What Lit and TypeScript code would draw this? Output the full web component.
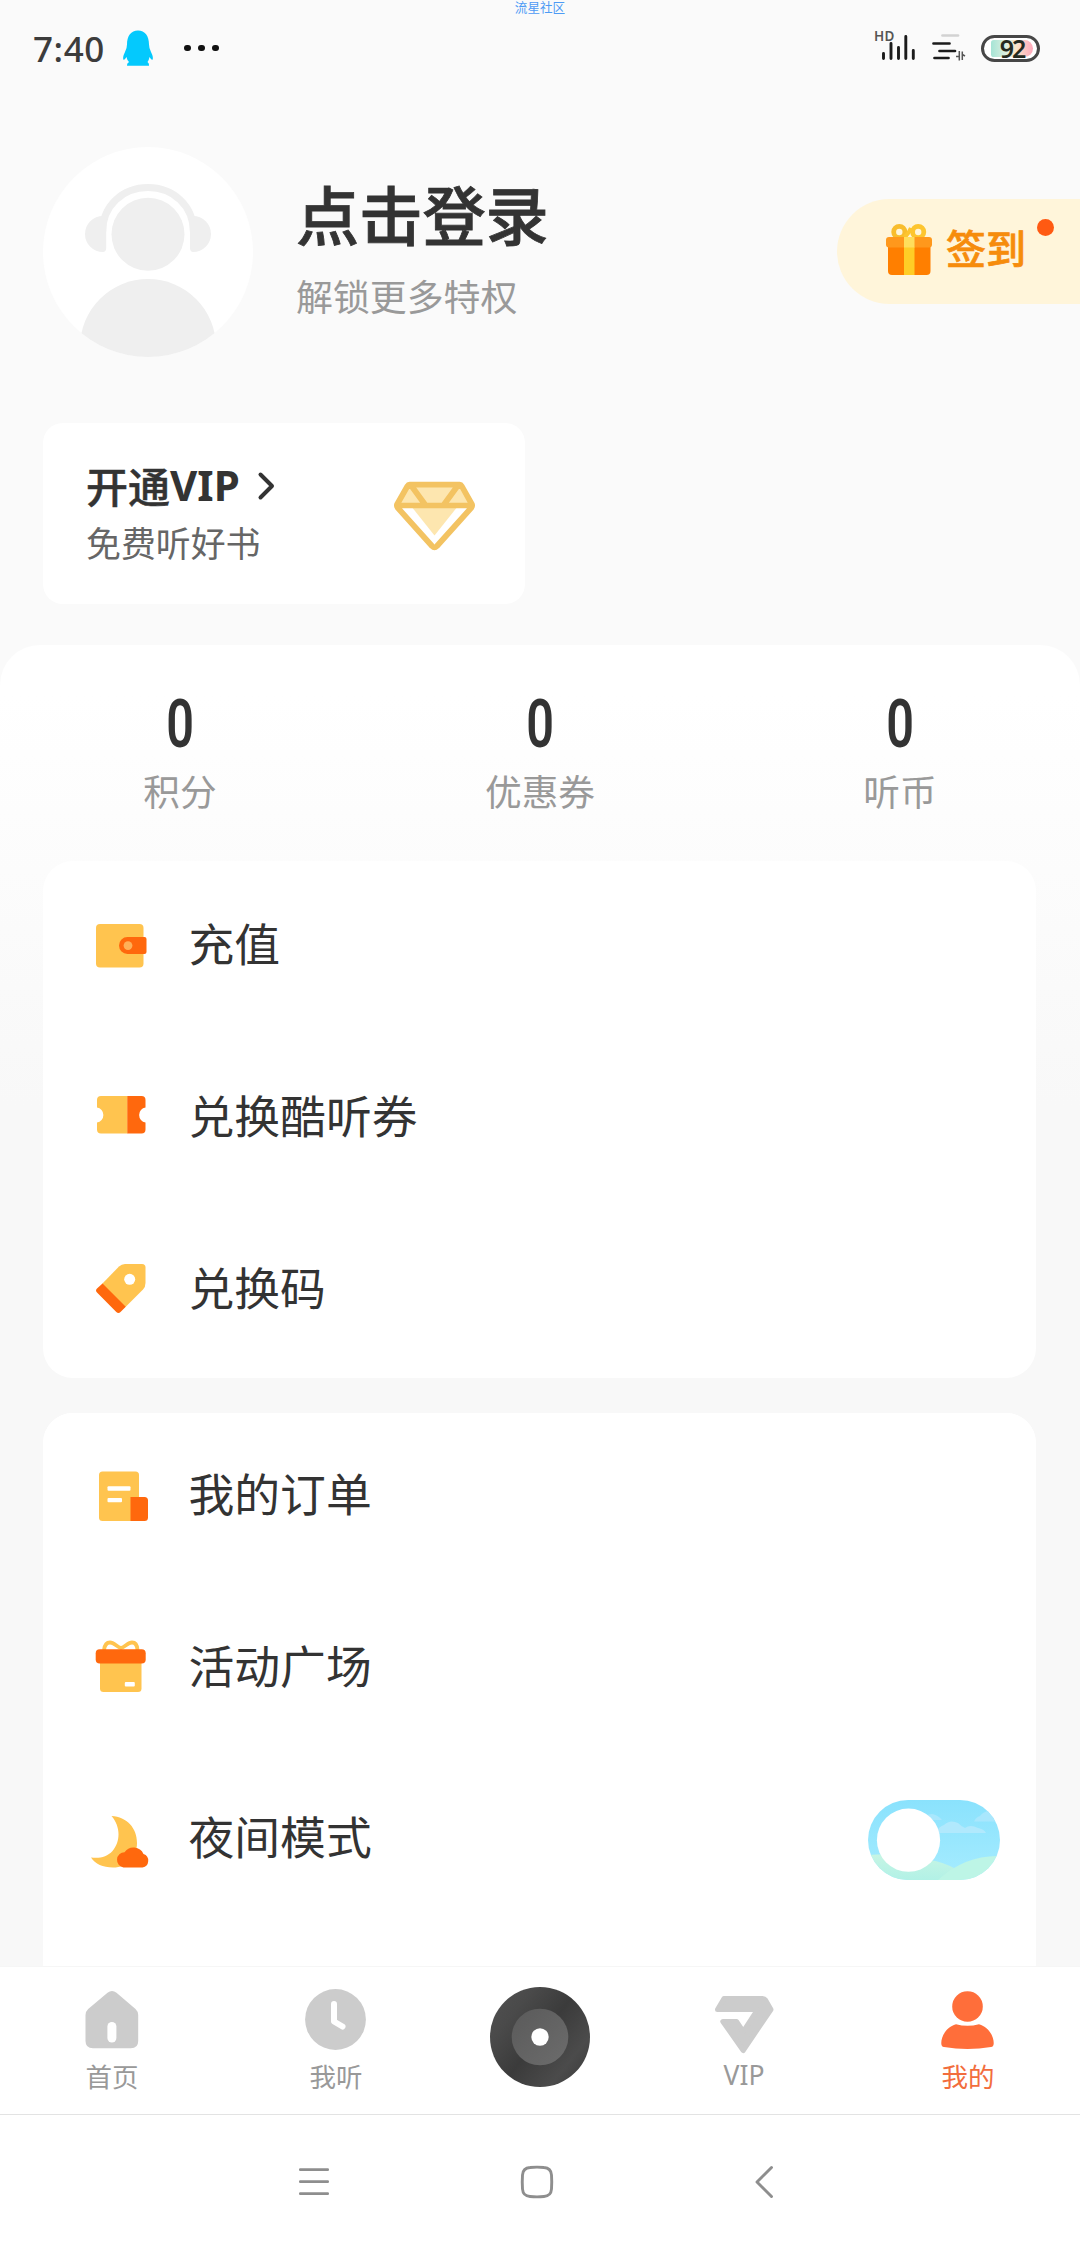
import { LitElement, html, svg, css, type TemplateResult } from "lit";
import { customElement, property, state } from "lit/decorators.js";
import { classMap } from "lit/directives/class-map.js";

const icon = (x: number, y: number, w: number, h: number, body: unknown) =>
  html`<svg width=${w} height=${h} viewBox="${x} ${y} ${w} ${h}" fill="none">${body}</svg>`;

const YELLOW = "#ffc44f";
const ORANGE = "#ff680d";

// Menu icons share one 64px frame
const menuIcons: Record<string, TemplateResult> = {
  wallet: icon(89, 915, 64, 64, svg`
    <rect x="96" y="924" width="47.5" height="43.5" rx="4" fill=${YELLOW}/>
    <path d="M127.500 937H144.500a2 2 0 0 1 2 2V952a2 2 0 0 1-2 2H127.500a8.500 8.500 0 0 1 0-17Z" fill=${ORANGE}/>
    <circle cx="128" cy="945.600" r="4.400" fill="#ffb058"/>`),
  ticket: icon(89, 1086, 64, 64, svg`
    <path d="M127.500 1095H101a4 4 0 0 0-4 4V1106.500a7.600 7.600 0 0 1 0 15V1128.500a4 4 0 0 0 4 4H127.500Z" fill=${YELLOW}/>
    <path d="M127.300 1095H141.500a4 4 0 0 1 4 4V1106.500a7.600 7.600 0 0 0 0 15V1128.500a4 4 0 0 1-4 4H127.300Z" fill=${ORANGE}/>`),
  tag: icon(89, 1258, 64, 64, svg`
    <path d="M102 1284 119 1266.500Q121.500 1264 125 1264H142Q145.500 1264 145.500 1267.500V1283Q145.500 1287 143 1289.500L125.500 1307Z" fill=${YELLOW}/>
    <path d="M102.500 1283.500 125.800 1306.800 120.500 1312Q118.500 1314 116.300 1312L97 1292.500Q95 1290.500 97 1288.500Z" fill=${ORANGE}/>
    <circle cx="129.700" cy="1279.300" r="5.500" fill="#fff"/>`),
  order: icon(89, 1464, 64, 64, svg`
    <rect x="99" y="1471.500" width="40" height="49.500" rx="3.500" fill=${YELLOW}/>
    <path d="M130.500 1497H144.500a3.500 3.500 0 0 1 3.500 3.500V1517.500a3.500 3.500 0 0 1-3.500 3.500H130.500Z" fill=${ORANGE}/>
    <rect x="107.500" y="1486.300" width="23" height="4.500" rx="1" fill="#fff"/>
    <rect x="107.500" y="1498" width="14.500" height="4.300" rx="1" fill="#fff"/>`),
  gift: icon(89, 1636, 64, 64, svg`
    <path d="M104 1650Q105 1642.500 110 1642.500C114 1642.500 117 1647 121 1648C125 1647 128 1642.500 132 1642.500Q137 1642.500 137.500 1650" stroke=${YELLOW} stroke-width="3.800"/>
    <path d="M100 1661H141.500V1688.500a3.500 3.500 0 0 1-3.500 3.500H103.500a3.500 3.500 0 0 1-3.500-3.500Z" fill=${YELLOW}/>
    <rect x="95.700" y="1649.200" width="50" height="14.300" rx="4" fill=${ORANGE}/>
    <rect x="124.800" y="1682" width="10" height="4.400" rx="1" fill="#fff"/>`),
  moon: icon(89, 1807, 64, 64, svg`
    <path d="M111.500 1815C127 1816 137 1827 137 1842C137 1856 128 1866.500 113 1866.500C103 1866.500 95 1863 91 1856.500C100 1857.500 107 1856 112.500 1850C120.500 1841 121 1826 111.500 1815Z" fill=${YELLOW}/>
    <path d="M123.500 1866.500A7.700 7.700 0 0 1 124.500 1851.200A11 11 0 0 1 143.500 1853A7 7 0 0 1 142.500 1866.500Z" fill=${ORANGE}/>`),
};

const navIcons: Record<string, TemplateResult> = {
  home: icon(80, 1984, 64, 70, svg`
    <path d="M107.500 1992.800Q112 1989 116.500 1992.800L135.500 2009Q138.200 2011.500 138.200 2015V2041Q138.200 2048.300 130.800 2048.300H93Q85.500 2048.300 85.500 2041V2015Q85.500 2011.500 88.200 2009Z" fill="#ccc"/>
    <rect x="107.400" y="2022" width="9" height="20.500" rx="4.500" fill="#fff"/>`),
  clock: icon(304, 1984, 64, 70, svg`
    <circle cx="335.500" cy="2019.500" r="30.400" fill="#ccc"/>
    <path d="M334 2004V2021.500L342.500 2026.500" stroke="#fff" stroke-width="6" stroke-linecap="round" stroke-linejoin="round"/>`),
  vip: icon(712, 1984, 64, 70, svg`
    <path d="M724 1998.500H762.500Q764.500 1998.500 765.500 2000L771 2009.500 743.200 2050.500 722.800 2021.500H736.500L743.200 2031.500 757.500 2009.500H717.500Z" fill="#ccc" stroke="#ccc" stroke-width="5" stroke-linejoin="round"/>`),
  mine: icon(936, 1984, 64, 70, svg`
    <circle cx="967.500" cy="2006.500" r="15.300" fill="#ff6e3a"/>
    <path d="M956 2024.300Q967.500 2027.300 979 2024.300C990 2027.500 994 2038 993.700 2043.500Q993.700 2046.500 991 2047.100Q967.500 2051 944 2047.100Q941.300 2046.500 941.300 2043.500C941 2038 945 2027.500 956 2024.300Z" fill="#ff6e3a"/>`),
};

const disc = icon(490, 1987, 100, 100, svg`
  <defs>
    <linearGradient id="rim" x1="0" y1="0.100" x2="1" y2="0.900">
      <stop offset="0" stop-color="#505050"/><stop offset=".22" stop-color="#4a4a4a"/>
      <stop offset=".5" stop-color="#3b3b3b"/><stop offset=".8" stop-color="#4b4b4b"/><stop offset="1" stop-color="#3c3c3c"/>
    </linearGradient>
    <linearGradient id="hub" x1="0" y1="0" x2="1" y2="1">
      <stop offset="0" stop-color="#5a5a5a"/><stop offset=".5" stop-color="#636363"/><stop offset="1" stop-color="#6c6c6c"/>
    </linearGradient>
  </defs>
  <circle cx="540" cy="2037" r="50" fill="url(#rim)"/>
  <circle cx="540" cy="2037" r="28.300" fill="url(#hub)"/>
  <circle cx="540" cy="2037" r="8.700" fill="#fff"/>`);

const avatar = icon(43, 147, 210, 210, svg`
  <defs><clipPath id="face"><circle cx="148" cy="252" r="105"/></clipPath></defs>
  <circle cx="148" cy="252" r="105" fill="#fff"/>
  <g clip-path="url(#face)">
    <circle cx="148" cy="234.300" r="36.500" fill="#efefef"/>
    <circle cx="148" cy="347" r="68" fill="#efefef"/>
  </g>
  <path d="M102.500 232C102.500 206 122.500 187.500 148 187.500S193.500 206 193.500 232" stroke="#efefef" stroke-width="7.200"/>
  <path d="M106.200 216H103A18 18 0 0 0 103 252Q106 252 106.200 248Z" fill="#efefef"/>
  <path d="M190 216H193A18 18 0 0 1 193 252Q190.200 252 190 248Z" fill="#efefef"/>`);

const signGift = icon(884, 220, 50, 56, svg`
  <circle cx="899.300" cy="231" r="5.600" stroke="#f8bd2d" stroke-width="4.800"/>
  <circle cx="918.200" cy="231" r="5.600" stroke="#fdc52f" stroke-width="4.800"/>
  <path d="M904.500 236Q908.500 233 911 227" stroke="#fdc52f" stroke-width="4"/>
  <path d="M888 244H930.500V270a4 4 0 0 1-4 4H892a4 4 0 0 1-4-4Z" fill="#ff7f00"/>
  <rect x="886" y="236" width="46" height="10.500" rx="3" fill="#ff981c"/>
  <rect x="904" y="246" width="10.500" height="28" fill="#ffcd26"/>
  <rect x="904" y="236" width="10.500" height="10.500" fill="#ffde5c"/>`);

const diamond = icon(389, 476, 90, 76, svg`
  <path d="M410 486H459.500L471 505H398Z" fill="#fde6af"/>
  <path d="M411 506H458L434.500 535.500Z" fill="#fde6af"/>
  <path d="M409.500 484.700H459.700Q461 484.700 461.700 486L472 504.500Q472.500 506 471.500 507.500L437 546Q434.500 548.500 432 546L397.500 507.500Q396.500 506 397 504.500L407.500 486Q408.200 484.700 409.500 484.700ZM397.500 505.500H471.500M411.500 486 425 504.500M457.500 486 444 504.500" stroke="#f3c362" stroke-width="5.700" stroke-linejoin="round"/>`);

const penguin = icon(120, 28, 36, 40, svg`
  <path d="M138 30.500C145 30.500 149 36 149 44.500Q149 48 151 52Q154 58 152.300 60Q151 59.500 149.500 57Q149 60 147.500 62Q149.500 63.500 149 65.800H127Q126.500 63.500 129 62Q127 60 126.500 57Q125 59.500 123.700 60Q122 58 125 52Q127 48 127 44.500C127 36 131 30.500 138 30.500Z" fill="#04c9fd"/>`);

const signal = icon(880, 32, 40, 32, svg`
  <path d="M883.500 53.500V58.500M891 43.500V58.500M898.500 47.500V58.500M905.800 36.500V58.500M913.300 50.500V58.500" stroke="#1b1b1b" stroke-width="2.900" stroke-linecap="round"/>`);

const network = icon(931, 32, 38, 32, svg`
  <path d="M942.500 35.500H958" stroke="#d2d2d2" stroke-width="2.700" stroke-linecap="round"/>
  <path d="M933.500 43.500H949.500M939.500 51H955M934.500 58H948.500" stroke="#1b1b1b" stroke-width="2.700" stroke-linecap="round"/>
  <path d="M959.300 51V60.500M959.300 56.500L956 56.500M962.300 60V51.500M962.300 54.500L965 56" stroke="#555" stroke-width="1.500"/>`);

const chevron = icon(256, 468, 20, 34, svg`
  <path d="M259.500 473.500 271 485 259.500 496.500" stroke="#333" stroke-width="4" stroke-linecap="round" stroke-linejoin="round"/>`);

const sysMenu = icon(298, 2166, 32, 32, svg`
  <path d="M300.300 2169.700H327.700M300.300 2181.700H327.700M300.300 2193.700H327.700" stroke="#8e8e8e" stroke-width="2.700" stroke-linecap="round"/>`);
const sysHome = icon(520, 2165, 34, 34, svg`
  <path d="M530 2167.500Q537 2166.800 544 2167.500Q551 2168 551.500 2175Q552 2182 551.500 2189Q551 2196 544 2196.500Q537 2197.200 530 2196.500Q523 2196 522.500 2189Q522 2182 522.500 2175Q523 2168 530 2167.500Z" stroke="#8e8e8e" stroke-width="2.900"/>`);
const sysBack = icon(753, 2164, 22, 36, svg`
  <path d="M771.500 2167.500 757 2182 771.500 2196.500" stroke="#8e8e8e" stroke-width="2.900" stroke-linecap="round" stroke-linejoin="round"/>`);

const base = css`
  :host { display: block; }
  * { box-sizing: border-box; }
  svg { display: block; flex: none; }
`;

@customElement("sky-toggle")
class SkyToggle extends LitElement {
  static styles = [base, css`
    .toggle { display: block; padding: 0; border: 0; background: none; }
  `];

  render() {
    return html`<button class="toggle" role="switch" aria-checked="false">${icon(868, 1801, 132, 80, svg`
      <defs>
        <clipPath id="pill"><rect x="868" y="1801" width="132" height="80" rx="40"/></clipPath>
        <linearGradient id="sky" x1="0" y1="0" x2="0" y2="1">
          <stop offset="0" stop-color="#8ae2fd"/><stop offset="1" stop-color="#a6ecff"/>
        </linearGradient>
        <linearGradient id="hill" x1="0" y1="0" x2="0" y2="1">
          <stop offset="0" stop-color="#c6f5e4"/><stop offset="1" stop-color="#b2f1e6"/>
        </linearGradient>
      </defs>
      <g clip-path="url(#pill)">
        <rect x="868" y="1801" width="132" height="80" fill="url(#sky)"/>
        <path d="M920 1821Q925 1815 932 1815Q938 1816 942 1821Z" fill="#a9e7fd"/>
        <path d="M936 1834Q939 1827 944 1826Q950 1820 958 1824Q962 1828 965 1829Q970 1825 978 1829Q984 1830 986 1834Z" fill="#b1e9fd"/>
        <path d="M974 1822.500Q976 1818 980 1817Q984 1812 990 1811.500H1002V1822.500Z" fill="#a9e7fd"/>
        <path d="M868 1856Q900 1853 930 1861Q943 1863 956 1870V1881H868Z" fill="url(#hill)"/>
        <path d="M938 1881Q965 1856 1000 1857V1881Z" fill="#bdf5e6"/>
      </g>
      <circle cx="908.500" cy="1841.200" r="31.600" fill="#fff"/>`)}</button>`;
  }
}

@customElement("menu-card")
class MenuCard extends LitElement {
  @property({ attribute: false }) items: { icon: string; label: string; toggle?: boolean }[] = [];

  static styles = [base, css`
    .card { background: #fff; border-radius: 30px; padding-bottom: 2px; }
    .row { display: flex; align-items: center; height: 171.800px; padding: 0 36px 0 46px; }
    .label {
      margin-left: 35.500px; flex: 1; font-size: 45.800px; line-height: 60px; color: #333;
      padding-bottom: 9px; font-weight: 400; white-space: nowrap;
    }
  `];

  render() {
    return html`<div class="card">
      ${this.items.map((item) => html`<div class="row">
        ${menuIcons[item.icon]}
        <span class="label">${item.label}</span>
        ${item.toggle ? html`<sky-toggle></sky-toggle>` : null}
      </div>`)}
    </div>`;
  }
}

@customElement("app-root")
class AppRoot extends LitElement {
  @state() private tab = "mine";

  private stats = [["0", "积分"], ["0", "优惠券"], ["0", "听币"]];
  private wallet = [
    { icon: "wallet", label: "充值" },
    { icon: "ticket", label: "兑换酷听券" },
    { icon: "tag", label: "兑换码" },
  ];
  private tools = [
    { icon: "order", label: "我的订单" },
    { icon: "gift", label: "活动广场" },
    { icon: "moon", label: "夜间模式", toggle: true },
  ];
  private tabs = [
    { id: "home", label: "首页" },
    { id: "clock", label: "我听" },
    { id: "play", label: "" },
    { id: "vip", label: "VIP" },
    { id: "mine", label: "我的" },
  ];

  static styles = [base, css`
    .screen {
      width: 1080px; height: 2244px; overflow: hidden; background: #fafafa;
      display: flex; flex-direction: column; position: relative;
      font-family: "Noto Sans CJK SC", sans-serif; color: #333;
    }
    .watermark {
      position: absolute; left: 0; right: 0; top: 0; text-align: center;
      font-size: 12.600px; line-height: 13px; color: #4d9bf5;
    }
    .status { flex: none; height: 96px; display: flex; align-items: center; padding-left: 33px; padding-right: 40px; }
    .time { width: 87px; font: 500 35px/48px "Noto Sans", sans-serif; color: #3c3c3c; letter-spacing: .6px; padding-top: 1px; }
    .more { display: flex; gap: 7.200px; margin-left: 28px; flex: 1; }
    .more-dot { width: 6.800px; height: 6.800px; border-radius: 50%; background: #111; }
    .signal { position: relative; margin-right: 11px; }
    .hd { position: absolute; left: -6px; top: -3px; font: 600 13.500px/14px "Noto Sans", sans-serif; color: #555; letter-spacing: .4px; }
    .battery {
      width: 59px; height: 27px; margin-left: 12px; border: 3px solid #474747; border-radius: 14px; padding: 2px 4px 2px 7px;
      background: #fff; display: flex;
    }
    .charge {
      flex: 1; border-radius: 3px 9px 9px 3px; display: flex; align-items: center; justify-content: center;
      background: linear-gradient(90deg, #a5e4d5, #dcefe0 35%, #fbe5c8 60%, #ffa8bb);
      font: 600 25px/17px "Noto Sans", sans-serif; color: #252a20; letter-spacing: -2px;
    }
    .profile { flex: none; height: 327px; padding: 51px 0 0 43px; display: flex; }
    .who { margin-left: 43px; padding-top: 21px; flex: 1; }
    .login { font-size: 63.200px; line-height: 90px; font-weight: 500; -webkit-text-stroke: .8px #333; white-space: nowrap; }
    .perk { font-size: 36.900px; line-height: 52px; color: #999; margin-top: 11px; }
    .sign {
      width: 243px; height: 105px; margin-top: 52px; border-radius: 52.500px 0 0 52.500px; background: #fff5da;
      display: flex; align-items: center; padding: 0 26px 6px 47px; position: relative;
    }
    .sign-text { margin-left: 12px; font-size: 40px; line-height: 56px; font-weight: 500; -webkit-text-stroke: .7px #f68c0c; color: #f68c0c; padding-bottom: 3px; white-space: nowrap; }
    .badge { position: absolute; right: 26px; top: 20px; width: 17px; height: 17px; border-radius: 50%; background: #ff5a12; }
    .vip {
      flex: none; width: 482px; height: 181px; margin-left: 43px; border-radius: 20px; background: #fff;
      display: flex; align-items: center; padding: 0 46px 0 43px; justify-content: space-between;
    }
    .vip-text { padding-bottom: 5px; }
    .vip-title { display: flex; align-items: center; font-size: 42px; line-height: 60px; font-weight: 500; height: 60px; -webkit-text-stroke: .5px #333; }
    .vip-word { font: 700 42px/60px "Noto Sans", sans-serif; margin-right: 17px; -webkit-text-stroke: 0; }
    .vip-title svg { margin-top: 2px; }
    .vip-sub { font-size: 34.900px; line-height: 50px; color: #666; margin-top: 2px; }
    .panel {
      flex: none; height: 1321px; margin-top: 41px; padding: 0 44px 0 43px; border-radius: 40px 40px 0 0; overflow: hidden;
      background: linear-gradient(#fff 0, #fff 50px, #f8f8f8 460px);
    }
    .stats { display: grid; grid-template-columns: repeat(3, 360px); margin: 0 -44px 0 -43px; height: 216px; padding-top: 40px; }
    .stat { display: flex; flex-direction: column; align-items: center; }
    .num { font: 600 66.500px/78px Roboto, sans-serif; transform: scaleX(.73); }
    .stat-label { font-size: 36.700px; line-height: 52px; color: #999; margin-top: 1px; }
    .cards { display: flex; flex-direction: column; gap: 35px; }
    /* The second list sits slightly tighter against its card's top edge */
    .tools { height: 600px; border-radius: 30px 30px 0 0; background: #fff; }
    .tools-list { margin-top: -3px; }
    .tools { overflow: hidden; }
    .tabs {
      flex: none; height: 148px; background: #fff; display: grid; grid-template-columns: 224px 224px 184px 224px 224px;
      border-top: 1px solid #f6f6f6;
    }
    .tab { display: flex; flex-direction: column; align-items: center; padding-top: 17px; color: #999; }
    .tab.play { padding-top: 20px; }
    .tab.active { color: #f26d3d; }
    .tab-label { font-size: 26.500px; line-height: 38px; margin-top: 3px; }
    .tab-label.latin { font-family: "Noto Sans", sans-serif; margin-top: 2px; }
    .system {
      flex: 1; background: #fff; border-top: 1.500px solid #e3e3e3; display: flex; align-items: center;
      padding: 5px 0 0 298px;
    }
    .sys-home { margin-left: 190px; }
    .sys-back { margin-left: 199px; }
  `];

  render() {
    return html`<div class="screen">
      <div class="watermark">流星社区</div>
      <header class="status">
        <span class="time">7:40</span>
        ${penguin}
        <span class="more"><i class="more-dot"></i><i class="more-dot"></i><i class="more-dot"></i></span>
        <span class="signal"><span class="hd">HD</span>${signal}</span>
        ${network}
        <span class="battery"><span class="charge">92</span></span>
      </header>
      <section class="profile">
        ${avatar}
        <div class="who">
          <div class="login">点击登录</div>
          <div class="perk">解锁更多特权</div>
        </div>
        <div class="sign">${signGift}<span class="sign-text">签到</span><i class="badge"></i></div>
      </section>
      <section class="vip">
        <div class="vip-text">
          <div class="vip-title">开通<span class="vip-word">VIP</span>${chevron}</div>
          <div class="vip-sub">免费听好书</div>
        </div>
        ${diamond}
      </section>
      <main class="panel">
        <div class="stats">
          ${this.stats.map(([n, label]) => html`<div class="stat">
            <span class="num">${n}</span><span class="stat-label">${label}</span>
          </div>`)}
        </div>
        <div class="cards">
          <menu-card .items=${this.wallet}></menu-card>
          <div class="tools"><menu-card class="tools-list" .items=${this.tools}></menu-card></div>
        </div>
      </main>
      <nav class="tabs">
        ${this.tabs.map((t) => html`<div
          class=${classMap({ tab: true, play: t.id === "play", active: t.id === this.tab })}
          @click=${() => { if (t.label) this.tab = t.id; }}>
          ${t.id === "play" ? disc : navIcons[t.id]}
          ${t.label ? html`<span class=${classMap({ "tab-label": true, latin: t.id === "vip" })}>${t.label}</span>` : null}
        </div>`)}
      </nav>
      <footer class="system">
        <span>${sysMenu}</span><span class="sys-home">${sysHome}</span><span class="sys-back">${sysBack}</span>
      </footer>
    </div>`;
  }
}
